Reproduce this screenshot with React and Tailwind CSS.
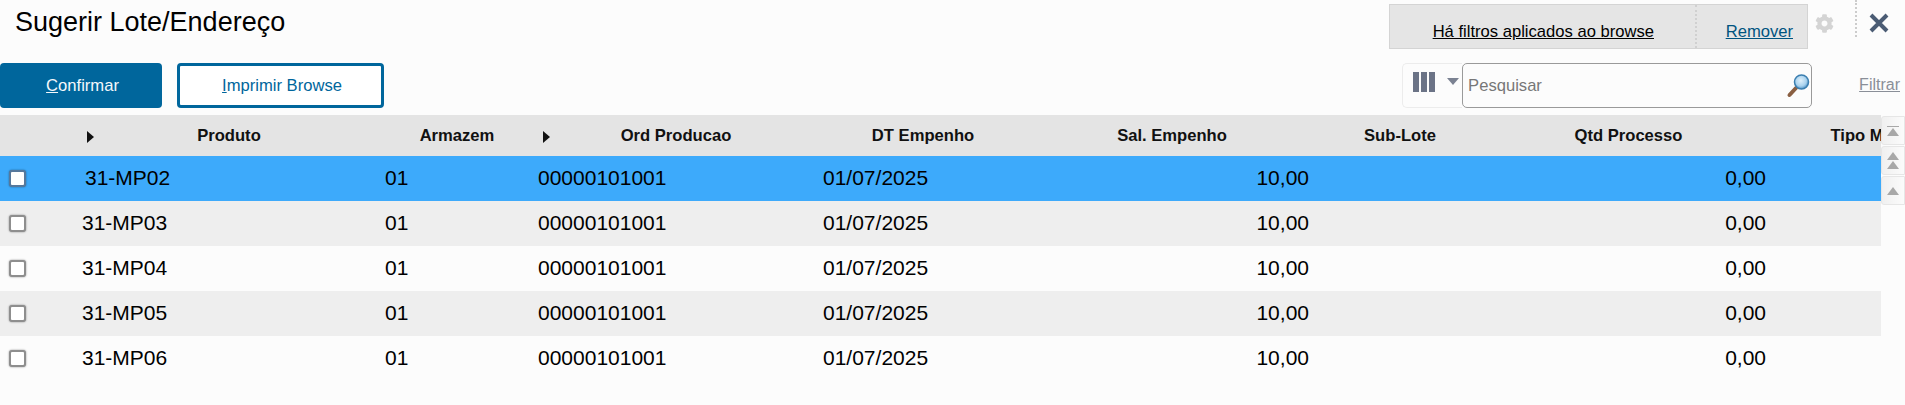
import { FaCog } from "react-icons/fa";

const cols = "grid-cols-[80px_298px_158px_280px_214px_284px_172px_285px_246px]";

const rows = ["31-MP02", "31-MP03", "31-MP04", "31-MP05", "31-MP06"];

const rowColors = ["bg-[#3daafb]", "bg-[#eeeeee]", "bg-[#fcfcfc]", "bg-[#eeeeee]", "bg-[#fcfcfc]"];

function Arrow({ className }) {
  return (
    <svg width="7" height="12" viewBox="0 0 7 12" className={className}>
      <path d="M0 0 L7 6 L0 12 Z" fill="#111" />
    </svg>
  );
}

function HeadCell({ children }) {
  return <div className="flex items-center justify-center pt-[2px] text-[16.6px] font-bold text-[#111] whitespace-nowrap">{children}</div>;
}

function ScrollButton({ children }) {
  return (
    <button className="mb-[1px] flex h-[29px] w-[24px] flex-col items-center justify-center gap-[1px] rounded-l-[3px] border border-[#e6e6e6] bg-gradient-to-r from-[#f0f0f0] to-[#fbfbfb]">
      {children}
    </button>
  );
}

function Tri() {
  return (
    <svg width="12" height="8" viewBox="0 0 12 8">
      <path d="M6 0 L12 8 L0 8 Z" fill="#a8a8a8" />
    </svg>
  );
}

export default function App() {
  return (
    <div className="flex h-screen w-full flex-col overflow-hidden bg-[#fcfcfc] font-['Liberation_Sans',Arial,sans-serif] text-black">
      <div className="flex h-[63px] items-start">
        <h1 className="ml-[15px] mt-[5px] text-[27px] leading-[34px]">Sugerir Lote/Endereço</h1>
        <div className="ml-auto mt-[4px] flex h-[45px] w-[419px] border border-[#d4d4d4] bg-[#e5e5e5] text-[16.6px]">
          <div className="flex w-[307px] items-end justify-end border-r-2 border-dotted border-[#d0d0d0] pb-[3px] pr-[41px]">
            <a className="underline">Há filtros aplicados ao browse</a>
          </div>
          <div className="flex flex-1 items-end justify-end pb-[3px] pr-[14px]">
            <a className="text-[#00547f] underline">Remover</a>
          </div>
        </div>
        <FaCog className="ml-[7px] mt-[14px] text-[#d4d4d4]" size={19} />
        <div className="ml-[21px] h-[37px] border-l-2 border-dotted border-[#cccccc]" />
        <svg width="20" height="20" viewBox="0 0 20 20" className="ml-[12px] mt-[13px]">
          <path d="M2 2 L18 18 M18 2 L2 18" stroke="#4b5c74" strokeWidth="4" />
        </svg>
        <div className="w-[16px]" />
      </div>

      <div className="flex h-[45px] items-stretch">
        <button className="w-[162px] rounded-[4px] bg-[#00669c] pl-[3px] pt-[2px] text-center text-[16.6px] text-[#f4f8fb]">
          <span className="underline">C</span>onfirmar
        </button>
        <button className="ml-[15px] w-[207px] rounded-[4px] border-[3px] border-[#00669c] bg-white pl-[3px] pt-[2px] text-center text-[16.6px] text-[#00669c]">
          <span className="underline">I</span>mprimir Browse
        </button>
        <div className="ml-auto flex w-[60px] items-start rounded-l-[5px] border border-r-0 border-[#ececec] pl-[10px] pt-[8px]">
          <div className="flex gap-[2px]">
            <div className="h-[20px] w-[6px] bg-[#6b7386]" />
            <div className="h-[20px] w-[6px] bg-[#6b7386]" />
            <div className="h-[20px] w-[6px] bg-[#6b7386]" />
          </div>
          <svg width="12" height="7" viewBox="0 0 12 7" className="ml-[12px] mt-[6px]">
            <path d="M0 0 L12 0 L6 7 Z" fill="#7b8292" />
          </svg>
        </div>
        <div className="flex w-[350px] items-center rounded-[5px] border border-[#9a9a9a] bg-[#fcfcfc] pl-[5px] pr-[1px]">
          <span className="pt-[2px] text-[16.6px] text-[#777777]">Pesquisar</span>
          <svg width="24" height="26" viewBox="0 0 24 26" className="ml-auto">
            <defs>
              <radialGradient id="lens" cx="0.45" cy="0.4" r="0.65">
                <stop offset="0" stopColor="#dff0fb" />
                <stop offset="0.6" stopColor="#a9d2ee" />
                <stop offset="1" stopColor="#3f86bd" />
              </radialGradient>
            </defs>
            <path d="M10 15 L3.5 22" stroke="#8a5f42" strokeWidth="4" strokeLinecap="round" />
            <circle cx="15.5" cy="9" r="7" fill="url(#lens)" stroke="#3c7fb0" strokeWidth="1.5" />
          </svg>
        </div>
        <a className="ml-[47px] mt-[13px] self-start text-[16px] leading-[18px] text-[#8a8f98] underline">Filtrar</a>
        <div className="w-[5px]" />
      </div>

      <div className="mt-[7px] flex min-h-0 flex-1 items-start">
        <div className="w-[1881px] overflow-hidden">
          <div className={`grid h-[41px] w-max bg-[#e4e4e4] ${cols}`}>
            <div />
            <div className="relative flex items-center justify-center pt-[2px] text-[16.6px] font-bold text-[#111]">
              <Arrow className="absolute left-[7px] top-[16px]" />
              Produto
            </div>
            <HeadCell>Armazem</HeadCell>
            <div className="relative flex items-center justify-center pt-[2px] text-[16.6px] font-bold text-[#111]">
              <Arrow className="absolute left-[7px] top-[16px]" />
              Ord Producao
            </div>
            <HeadCell>DT Empenho</HeadCell>
            <HeadCell>Sal. Empenho</HeadCell>
            <HeadCell>Sub-Lote</HeadCell>
            <HeadCell>Qtd Processo</HeadCell>
            <HeadCell>Tipo Movimento</HeadCell>
          </div>
          {rows.map((produto, i) => (
            <div key={produto} className={`grid h-[45px] w-max items-center pb-[2px] text-[21px] ${cols} ${rowColors[i]}`}>
              <div className="pl-[9px]">
                <div
                  className={`mt-[2px] h-[17px] w-[17px] rounded-[3px] border-2 bg-white shadow-[0_0_2px_rgba(0,0,0,0.45)] ${
                    i === 0 ? "border-[#56789c]" : "border-[#8e8e8e]"
                  }`}
                />
              </div>
              <div className={i === 0 ? "pl-[5px]" : "pl-[2px]"}>{produto}</div>
              <div className="pl-[7px]">01</div>
              <div className="pl-[2px]">00000101001</div>
              <div className="pl-[7px]">01/07/2025</div>
              <div className="pr-[5px] text-right">10,00</div>
              <div />
              <div className="pr-[5px] text-right">0,00</div>
              <div />
            </div>
          ))}
        </div>
        <div className="flex w-[24px] flex-col pt-[1px]">
          <ScrollButton>
            <div className="h-[1px] w-[12px] bg-[#a8a8a8]" />
            <Tri />
          </ScrollButton>
          <ScrollButton>
            <Tri />
            <Tri />
          </ScrollButton>
          <ScrollButton>
            <Tri />
          </ScrollButton>
        </div>
      </div>
    </div>
  );
}
